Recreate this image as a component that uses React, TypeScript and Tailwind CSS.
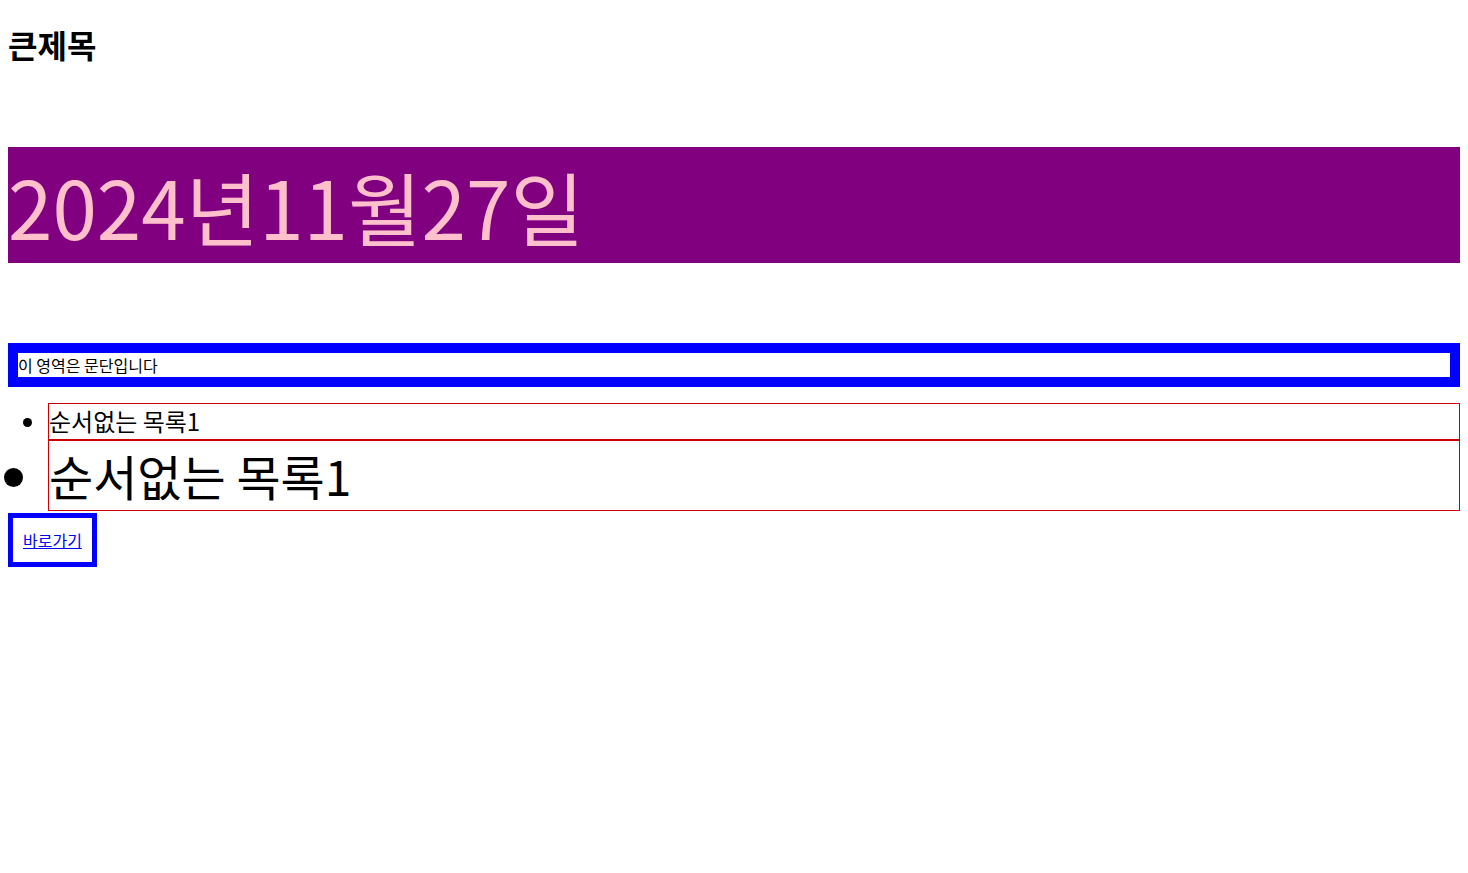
export default function App() {
  return (
    <div className="p-2 font-['Noto_Sans_CJK_KR','Noto_Sans',sans-serif] text-black bg-white min-h-screen">
      <h1 className="mt-[12.6px] text-[32px] font-bold leading-[46.4px]">큰제목</h1>

      <div className="mt-20 bg-[#800080] text-[80px] leading-[116px] text-[#ffc0cb]">
        2024년11월27일
      </div>

      <p className="mt-20 border-[10px] border-[#0000ff] text-base leading-6">
        이 영역은 문단입니다
      </p>

      <ul className="mt-4 list-disc pl-10">
        <li className="border border-[#cc0000] text-2xl leading-[34.8px]">순서없는 목록1</li>
        <li className="border border-[#cc0000] text-[48px] leading-[69.6px]">순서없는 목록1</li>
      </ul>

      <div className="pt-[2px]">
        <a
          href="#"
          className="inline-block border-[5px] border-[#0000ff] p-[10px] text-base leading-6 text-[#0000ee] underline"
        >
          바로가기
        </a>
      </div>
    </div>
  );
}
